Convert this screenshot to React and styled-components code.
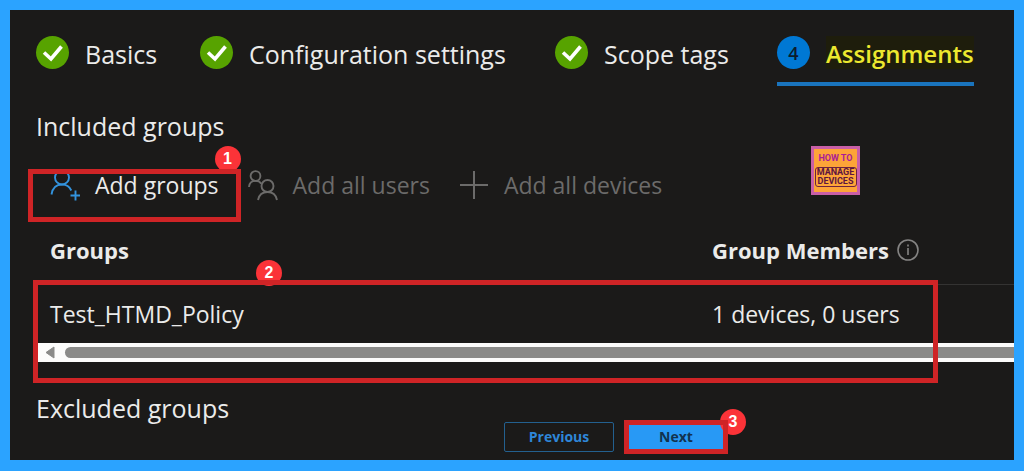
import React from "react";
import styled, { createGlobalStyle } from "styled-components";

const Global = createGlobalStyle`
  * { box-sizing: border-box; }
  body {
    margin: 0;
    background: #2ba3ff;
    color: #ebebea;
    font-family: "Segoe UI", "Open Sans", "Noto Sans", sans-serif;
    font-size: 23px;
    line-height: 32px;
  }
  button { font: inherit; color: inherit; cursor: pointer; }
`;

const Frame = styled.div`
  min-height: 100vh;
  padding: 10px 10px 11px;
  display: flex;
`;

const Panel = styled.main`
  flex: 1;
  min-width: 0;
  background: #1b1a19;
  padding: 26px 0 6px 26px;
`;

const Steps = styled.nav`
  display: grid;
  grid-template-columns: 164px 355px 222px auto;
  justify-content: start;
`;

const Step = styled.a`
  display: flex;
  align-items: center;
  justify-self: start;
  gap: 16px;
  padding-bottom: 13px;
  border-bottom: 4px solid ${(p) => (p.$current ? "#1a74bd" : "transparent")};
  color: ${(p) => (p.$current ? "#ece82f" : "inherit")};
  font-size: ${(p) => (p.$current ? 24 : 25)}px;
  font-weight: ${(p) => (p.$current ? 600 : 400)};
  text-decoration: none;
  white-space: nowrap;
`;

const StepMark = styled.span`
  display: flex;
  flex: none;
  align-items: center;
  justify-content: center;
  width: 33px;
  height: 33px;
  border-radius: 50%;
  background: ${(p) => (p.$current ? "#0078d4" : "#57a300")};
  color: #0c1c2e;
  font-size: 18px;
`;

const StepLabel = styled.span`
  padding-top: 3px;
  line-height: 30px;
  background: ${(p) => (p.$current ? "#1e1d0c" : "none")};
`;

const Heading = styled.h2`
  margin: ${(p) => p.$top}px 0 0;
  font-size: 25px;
  font-weight: 400;
  line-height: ${(p) => p.$line}px;
`;

const Toolbar = styled.div`
  display: flex;
  align-items: flex-start;
  justify-content: space-between;
  margin-top: 4px;
  padding: 0 154px 0 14px;
`;

const Tools = styled.div`
  display: flex;
  gap: 29px;
  padding-top: 23px;
`;

const Marked = styled.div`
  position: relative;
  display: flex;
`;

const Highlight = styled.span`
  position: absolute;
  inset: ${(p) => p.$inset};
  border: 5px solid #cf2426;
  pointer-events: none;
`;

const Badge = styled.span`
  position: absolute;
  top: ${(p) => p.$top}px;
  ${(p) => p.$side}: ${(p) => p.$offset}px;
  width: 26px;
  height: 26px;
  border-radius: 50%;
  background: #fb3338;
  color: #fff;
  font: 700 16px/26px "Liberation Sans", Arial, sans-serif;
  text-align: center;
`;

const ToolButton = styled.button`
  display: flex;
  align-items: center;
  gap: 15px;
  padding: 0;
  border: 0;
  background: none;
  white-space: nowrap;
  &:disabled { color: #6c6b6a; cursor: default; }
`;

const Logo = styled.div`
  display: flex;
  flex-direction: column;
  align-items: center;
  width: 49px;
  height: 49px;
  padding-top: 4px;
  border: 3px solid #c95fa6;
  background: #fda438;
  color: #ab1c96;
  font: 700 9px/11px Roboto, "Liberation Sans", sans-serif;
  white-space: nowrap;
`;

const LogoPlate = styled.div`
  display: flex;
  flex-direction: column;
  align-items: center;
  width: 42px;
  margin-top: 3px;
  border: 1px solid #6d2340;
  border-radius: 3px;
  color: #5d1440;
  line-height: 9px;
`;

const Groups = styled.section`
  position: relative;
  margin: 15px 0 0 2px;
`;

const GroupTable = styled.table`
  width: 100%;
  border-collapse: collapse;
  table-layout: fixed;
  th, td { padding: 0 0 0 12px; text-align: left; white-space: nowrap; }
  th { height: 68px; font-size: 22px; font-weight: 700; border-bottom: 1px solid #343332; }
  td { height: 59px; }
  th:first-child { width: 662px; }
`;

const HeaderLabel = styled.span`
  display: flex;
  align-items: center;
  gap: 8px;
`;

const ScrollTrack = styled.div`
  display: flex;
  align-items: center;
  gap: 10px;
  height: 19px;
  padding-left: 7px;
  background: #fcfcfb;
`;

const ScrollThumb = styled.div`
  flex: 1;
  height: 11px;
  border-radius: 6px 0 0 6px;
  background: #8b8b89;
`;

const Footer = styled.footer`
  display: flex;
  align-items: center;
  gap: 10px;
  padding-left: 468px;
`;

const FooterButton = styled.button`
  width: ${(p) => (p.$primary ? 104 : 110)}px;
  height: ${(p) => (p.$primary ? 34 : 30)}px;
  padding: 0;
  border: 1px solid ${(p) => (p.$primary ? "#2899f5" : "#23608f")};
  border-radius: 2px;
  background: ${(p) => (p.$primary ? "#2899f5" : "transparent")};
  color: ${(p) => (p.$primary ? "#12334f" : "#2e86d8")};
  font-size: 14px;
  font-weight: 700;
  line-height: 20px;
`;

const Check = () => (
  <svg width="33" height="33" viewBox="0 0 33 33" fill="none" stroke="#fff" strokeWidth="3.6" aria-hidden="true">
    <path d="M8 16.5l7 6.5L25.500 10.500" />
  </svg>
);

const AddPersonIcon = () => (
  <svg width="30" height="32" viewBox="0 0 30 32" fill="none" stroke="#3393dd" strokeWidth="1.900" aria-hidden="true">
    <circle cx="12" cy="8.500" r="7" />
    <path d="M1.500 25.500C2.500 19 6.500 15.500 12 15.500c4 0 7.500 2 9.300 6" />
    <path d="M25.500 21.500v10M20.500 26.500h10" />
  </svg>
);

const PeopleIcon = () => (
  <svg width="30" height="32" viewBox="0 0 30 32" fill="none" stroke="#6c6b6a" strokeWidth="1.900" aria-hidden="true">
    <circle cx="7.500" cy="7" r="4.900" />
    <path d="M1 18C1.300 14 4 11.900 7.500 11.900c2.500 0 4.500 1 5.800 2.900" />
    <circle cx="19.500" cy="17" r="6" />
    <path d="M10 31c1-5 4.500-8 9.500-8s8.500 3 9.500 8" />
  </svg>
);

const PlusIcon = () => (
  <svg width="30" height="32" viewBox="0 0 30 32" fill="none" stroke="#6c6b6a" strokeWidth="2" aria-hidden="true">
    <path d="M15 2v28M1 16h28" />
  </svg>
);

const InfoIcon = () => (
  <svg width="22" height="22" viewBox="0 0 22 22" fill="none" stroke="#858483" strokeWidth="1.600" role="img" aria-label="Info">
    <circle cx="11" cy="11" r="10" />
    <path d="M11 9v7M11 5.500v2" />
  </svg>
);

const ArrowLeft = () => (
  <svg width="10" height="13" viewBox="0 0 10 13" aria-hidden="true">
    <path d="M9 1v11L1 6.500z" fill="#8b8b89" stroke="#8b8b89" strokeLinejoin="round" />
  </svg>
);

const steps = ["Basics", "Configuration settings", "Scope tags", "Assignments"];

export default function App() {
  return (
    <Frame>
      <Global />
      <Panel>
        <Steps aria-label="Steps">
          {steps.map((label, i) => {
            const current = i === 3;
            return (
              <Step key={label} href="#" $current={current} aria-current={current ? "step" : undefined}>
                <StepMark $current={current}>{current ? i + 1 : <Check />}</StepMark>
                <StepLabel $current={current}>{label}</StepLabel>
              </Step>
            );
          })}
        </Steps>

        <Heading $top={24} $line={32}>Included groups</Heading>

        <Toolbar>
          <Tools>
            <Marked>
              <ToolButton><AddPersonIcon />Add groups</ToolButton>
              <Badge $top={-23} $side="right" $offset={-22}>1</Badge>
              <Highlight $inset="0 -22px -21px -22px" />
            </Marked>
            <ToolButton disabled><PeopleIcon />Add all users</ToolButton>
            <ToolButton disabled><PlusIcon />Add all devices</ToolButton>
          </Tools>
          <Logo>
            HOW TO
            <LogoPlate><span>MANAGE</span><span>DEVICES</span></LogoPlate>
          </Logo>
        </Toolbar>

        <Groups>
          <GroupTable>
            <thead>
              <tr>
                <th scope="col">Groups</th>
                <th scope="col"><HeaderLabel>Group Members <InfoIcon /></HeaderLabel></th>
              </tr>
            </thead>
            <tbody>
              <tr>
                <td>Test_HTMD_Policy</td>
                <td>1 devices, 0 users</td>
              </tr>
            </tbody>
          </GroupTable>
          <ScrollTrack>
            <ArrowLeft />
            <ScrollThumb />
          </ScrollTrack>
          <Badge $top={44} $side="left" $offset={218}>2</Badge>
          <Highlight $inset="64px 76px -21px -5px" />
        </Groups>

        <Heading $top={34} $line={24}>Excluded groups</Heading>

        <Footer>
          <FooterButton>Previous</FooterButton>
          <Marked>
            <FooterButton $primary>Next</FooterButton>
            <Badge $top={-11} $side="right" $offset={-18}>3</Badge>
            <Highlight $inset="0" />
          </Marked>
        </Footer>
      </Panel>
    </Frame>
  );
}
